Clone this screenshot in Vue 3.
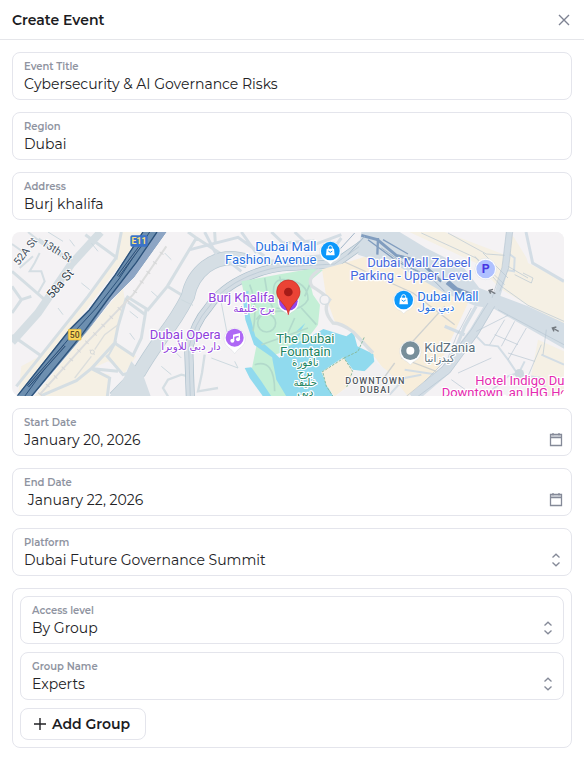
<script setup>
import { reactive } from 'vue'

const form = reactive({
  title: 'Cybersecurity & AI Governance Risks',
  region: 'Dubai',
  address: 'Burj khalifa',
  start: 'January 20, 2026',
  end: ' January 22, 2026',
  platform: 'Dubai Future Governance Summit',
  access: 'By Group',
  groups: ['Experts'],
})

const textFields = [
  { key: 'title', label: 'Event Title' },
  { key: 'region', label: 'Region' },
  { key: 'address', label: 'Address' },
]
const dateFields = [
  { key: 'start', label: 'Start Date' },
  { key: 'end', label: 'End Date' },
]

function addGroup() {
  form.groups.push('Experts')
}
</script>

<template>
  <form class="dialog" @submit.prevent>
    <header class="head">
      <h1>Create Event</h1>
      <button type="button" class="close" aria-label="Close">
        <svg width="12" height="12" viewBox="0 0 12 12"><path d="M1 1 11 11M11 1 1 11" /></svg>
      </button>
    </header>

    <div class="body">
      <div v-for="f in textFields" :key="f.key" class="field">
        <label :for="f.key">{{ f.label }}</label>
        <input :id="f.key" v-model="form[f.key]" type="text" />
      </div>

      <svg class="map" viewBox="12 12 1656 492" preserveAspectRatio="xMidYMid slice" role="img" aria-label="Map">
        <rect x="12" y="12" width="1656" height="492" fill="#f4f2f4" />

        <!-- left blocks -->
        <g fill="#f5f0e4">
          <path d="M335 12H410L230 250 60 470 30 505 40 415 95 385 250 200 325 90Z" />
          <path d="M80 505 225 325 345 180 350 215 330 290 325 345 385 385 350 435 300 400 245 425 305 440 300 505Z" />
        </g>
        <g fill="none" stroke="#d5dee3" stroke-width="9">
          <path d="M12 130 110 215M12 175 40 215 12 255M40 215 70 205M12 322 95 380M232 20 325 88 340 12M325 88 240 205 25 475" />
          <path d="M60 12 95 40 190 100 230 60M12 48 50 75M95 75 80 105 65 130 100 130 110 160 90 195" stroke-width="6" />
          <path d="M75 85 35 120" stroke-width="6" />
          <path d="M12 342 90 255 190 108 278 12" stroke-width="24" />
          <path d="M90 35 190 100" stroke-width="13" />
          <path d="M355 205 420 245 478 175 565 30M355 210 330 295 320 345 375 382 400 330 414 245M478 175 520 200M540 12 562 28 650 85M620 12 622 45M360 222 412 260M100 503 205 458 250 422 330 430M320 345 250 422 305 450 298 505M295 382 345 440 375 432" />
          <path d="M325 340 300 385 340 435" stroke-width="6" />
          <path d="M555 448 520 440 480 455 465 480 480 505M590 380 582 435 570 490 630 480" stroke-width="7" />
        </g>
        <g fill="none" stroke-linecap="butt">
          <path d="M720 100Q650 75 595 115 550 150 540 205 510 265 460 330 415 395 395 430 360 470 320 510" stroke="#b9c9d3" stroke-width="42" />
          <path d="M720 100Q650 75 595 115 550 150 540 205 510 265 460 330 415 395 395 430 360 470 320 510" stroke="#d5dee4" stroke-width="38" />
        </g>
        <path d="M370 400 405 440 430 510H300L345 455Z" fill="#d5dee4" />
        <path d="M120 12 165 40M185 35 200 55M250 45 270 70M220 165 245 185M150 240 165 260M430 190 450 208M365 250 390 270M470 75 490 95M365 315 380 335M460 415 490 440M520 215 555 232M500 370 520 390M640 225 660 330M610 390 690 420 680 400" fill="none" stroke="#cdd9df" stroke-width="3" />
        <path d="M95 500 230 350 375 200 475 55" fill="none" stroke="#dcdddd" stroke-width="6" />
        <path d="M95 500 230 350 375 200 475 55" fill="none" stroke="#d6d7d8" stroke-width="14" stroke-dasharray="3 32" />
        <path d="M200 450 250 385M245 365 260 380M260 365 290 320 330 290" fill="none" stroke="#dcdedc" stroke-width="4" />
        <circle cx="253" cy="372" r="6" fill="#f5f0e4" stroke="#d6d9d8" stroke-width="3" />

        <!-- highway -->
        <path d="M25 505 185 302 242 245 320 140 403 12H475L378 148 310 215 225 325 73 505Z" fill="#6d8fb0" />
        <path d="M475 12 378 148 310 215 230 320 300 215 385 105 447 12Z" fill="#8da5c4" />
        <g fill="none" stroke="#2c527b" stroke-width="4">
          <path d="M27 505 187 303 244 246 322 140 405 12" />
          <path d="M70 505 220 322 300 213 385 103 447 12" />
          <path d="M50 505 130 395 205 305 265 240 335 150 425 12" stroke-width="3" />
        </g>
        <path d="M60 475 170 352M330 145 400 50" stroke="#2c527b" stroke-width="8" />
        <path d="M60 475 170 352M330 145 400 50" stroke="#a9bdd0" stroke-width="2" />

        <!-- central roads -->
        <g fill="none" stroke="#d4dde4">
          <path d="M546 65 690 28 770 85M590 12 625 80M700 12 745 75M790 12 825 45 920 38M860 12 905 55 1000 20M1000 30 960 85M650 90 700 130" stroke-width="9" />
          <path d="M546 68 600 90 700 95 745 115" stroke-width="0" />
          <path d="M715 95Q800 110 850 95L960 85" stroke-width="16" />
        </g>
        <path d="M547 510 542 360Q560 285 600 240 640 180 720 145 790 115 850 115L980 108 1055 55 1110 12" fill="none" stroke="#a9bdca" stroke-width="27" />
        <path d="M547 510 542 360Q560 285 600 240 640 180 720 145 790 115 850 115L980 108 1055 55 1110 12" fill="none" stroke="#d4dde4" stroke-width="23" />
        <path d="M547 510 542 360Q560 285 600 240 640 180 720 145 790 115 850 115L980 108 1055 55 1110 12" fill="none" stroke="#b5c6d1" stroke-width="2" />

        <!-- mall -->
        <path d="M942 124 1010 105 1085 82 1180 105 1380 225 1285 430 1200 505H1175L1140 440 1104 392 1036 315 980 280 955 210Z" fill="#f8eedb" />

        <!-- park and water -->
        <path d="M700 160 820 138 910 122 945 126 905 160 915 200 936 230 930 290 900 330 815 375 790 385 850 505H765L730 430 746 350 725 280Z" fill="#c4efd6" />
        <g fill="#90daee">
          <path d="M702 190 722 190 718 215 726 265 742 325 796 372 815 390 828 360 900 330 946 303 1015 325 1036 310 1048 355 1096 378 1100 408 1070 430 1035 425 1006 388 940 432 975 505H835L805 455 792 388 738 350 712 275Z" />
          <path d="M710 420 730 418 760 460 790 505H765L725 450Z" />
          <path d="M865 310 892 285 880 305ZM840 335 880 312 870 332Z" />
        </g>
        <g fill="none" stroke="#b2dacb" stroke-width="5">
          <circle cx="776" cy="285" r="27" />
          <path d="M725 170Q750 230 735 310M745 275Q760 245 840 250M800 220Q785 150 830 155 900 160 900 215 880 255 805 240M770 150 780 210 800 250M815 145 825 190M905 170 890 205M760 350 900 300M880 240 925 290M840 315 860 270M740 410Q800 390 800 490" />
        </g>
        <path d="M935 125Q895 150 912 175 945 195 965 215 940 245 975 285 1000 285 1036 312L1095 375" fill="none" stroke="#dadfe2" stroke-width="10" />
        <circle cx="950" cy="215" r="14" fill="#f4f2f4" stroke="#d5dde2" stroke-width="4" />
        <path d="M942 432 1008 390 1034 430 1020 475 980 505 955 472Z" fill="#f8eedb" />
        <path d="M942 432 1008 390 1034 430 1015 480M945 435 955 475 975 505M1008 390 1050 370 1070 325" fill="none" stroke="#89bba0" stroke-width="3" stroke-dasharray="8 4" />
        <path d="M1100 400 1070 430 1035 430 1020 478 985 505H1200L1140 430Z" fill="#f1f0f1" />

        <!-- right side -->
        <path d="M1204 12 1404 105 1474 180 1564 235 1668 290V160L1560 105 1545 50 1500 12 1500 80 1400 45 1330 12Z" fill="#f5f0e4" />
        <path d="M1310 12 1490 80 1498 12ZM1508 12H1668V155L1565 105Z" fill="#f4f2f4" />
        <path d="M1590 335 1668 370V505H1600L1570 440Z" fill="#f5f0e4" />
        <path d="M1060 12H1175L1254 60 1364 115 1414 180 1560 235 1668 285V362L1454 240 1404 235 1304 192 1180 120 1050 80Z" fill="#d3dde5" />
        <g fill="none" stroke="#d3dde5">
          <path d="M1504 12 1492 120 1464 215" stroke-width="19" />
          <path d="M1450 225 1400 310 1315 425 1215 510" stroke-width="30" />
          <path d="M1404 235 1370 295 1340 370 1280 455 1210 500M1310 295 1370 320" stroke-width="10" />
          <path d="M1554 12 1574 105 1668 160" stroke-width="9" />
          <path d="M1500 75 1520 90 1518 130 1488 125M1400 320 1430 350 1470 355 1500 395 1530 440 1600 450 1620 505M1530 435 1500 445 1430 505M1530 440 1550 400M1668 410 1600 380" stroke-width="6" />
          <path d="M1145 500 1190 450 1240 440M1190 425 1290 440" stroke-width="6" />
        </g>
        <circle cx="1534" cy="437" r="14" fill="#cdd8de" />
        <g fill="none" stroke="#b7c6d2" stroke-width="2">
          <path d="M1240 15 1404 90 1480 175 1560 232 1668 280M1495 12 1482 118 1452 210M1514 12 1502 120 1475 190M1470 245 1668 350M1440 225 1390 305 1305 415 1195 505M1460 235 1410 320 1325 435 1230 505M1390 240 1345 325 1320 390 1250 460M1400 85 1490 170M1425 75 1500 150M1320 15 1435 78 1490 82" />
          <path d="M1405 310 1500 262M1445 350 1490 275M1480 355 1520 280M1500 395 1555 300M1460 320 1530 350M1500 375 1580 400M1560 445 1600 350M1330 455 1400 505M1350 435 1450 390M1615 305 1605 380M1560 150 1500 115M1520 140 1570 165 1575 150 1545 135" />
        </g>
        <path d="M1010 102 1215 195 1340 290M1310 235 1210 345M1160 405 1120 460M1180 390 1285 430" fill="none" stroke="#d0d2d0" stroke-width="4" />
        <g fill="none" stroke="#819dbf" stroke-width="9">
          <path d="M1060 22 1108 35 1165 82 1235 100 1300 160" />
          <path d="M1080 35 1170 102 1230 130M1125 35 1200 78" stroke-width="4" />
          <path d="M1318 162 1345 185 1398 205" stroke-width="15" />
          <path d="M1110 30 1108 80" stroke-width="7" />
        </g>
        <path d="M1020 80 1070 25M990 70 1040 15M1120 60 1190 108 1270 150 1310 190" fill="none" stroke="#a3b6c8" stroke-width="3" />
        <g fill="none" stroke="#747a80" stroke-width="4">
          <path d="M1462 197 1444 187M1455 184 1443 187 1448 197M1652 310 1634 300M1645 297 1633 300 1638 310" />
        </g>

        <!-- road shields -->
        <rect x="367" y="22" width="52" height="34" rx="5" fill="#3b73c7" />
        <text x="393" y="48" class="shield" fill="#ffe27a">E11</text>
        <rect x="181" y="304" width="38" height="32" rx="2" fill="#fbd65a" stroke="#e6b93b" stroke-width="2" />
        <text x="200" y="329" class="shield thin" fill="#5b4a24">50</text>

        <!-- street names -->
        <g class="street">
          <text transform="translate(32 114) rotate(-53)">52A St</text>
          <text transform="translate(98 50) rotate(32)">13th St</text>
          <text transform="translate(132 214) rotate(-49)" class="major">58a St</text>
        </g>

        <!-- place markers -->
        <g fill="#fff" stroke="#c9ced3" stroke-width="1">
          <path d="M967 110Q960 101 948 97A32 32 0 1 1 986 97Q974 101 967 110Z" />
          <path d="M1187 257Q1180 248 1168 244A32 32 0 1 1 1206 244Q1194 248 1187 257Z" />
          <path d="M680 377Q673 366 661 358A32 32 0 1 1 699 358Q687 366 680 377Z" />
          <path d="M1207 411Q1200 401 1188 396A32 32 0 1 1 1226 396Q1214 401 1207 411Z" />
          <path d="M841 262Q834 253 822 247A32 32 0 1 1 860 247Q848 253 841 262Z" />
          <circle cx="1433" cy="123" r="32" />
        </g>
        <circle cx="967" cy="69" r="28" fill="#0c98fb" />
        <circle cx="1187" cy="216" r="28" fill="#0c98fb" />
        <circle cx="680" cy="329" r="27" fill="#ae68f5" />
        <circle cx="1207" cy="368" r="28" fill="#788f9b" />
        <circle cx="841" cy="220" r="28" fill="#9345e8" />
        <circle cx="1433" cy="123" r="28" fill="#afc1ff" />
        <g fill="#fff">
          <path d="M956 62H978L980 82H954ZM1176 209H1198L1200 229H1174Z" />
          <circle cx="1207" cy="368" r="12" />
          <circle cx="673" cy="338" r="6" /><circle cx="690" cy="334" r="6" />
          <path d="M675 320 696 315V334H692V323L679 326V338H675Z" />
        </g>
        <path d="M961 63V59Q961 53 967 53T973 59V63M1181 210V206Q1181 200 1187 200T1193 206V210" fill="none" stroke="#fff" stroke-width="3" />
        <path d="M961 69Q967 77 973 69M1181 216Q1187 224 1193 216" fill="none" stroke="#0c98fb" stroke-width="3" />
        <text x="1433" y="136" class="parking">P</text>
        <path d="M841 260C836 225 806 220 806 191A35 35 0 0 1 876 191C876 220 846 225 841 260Z" fill="#ea4335" stroke="#c5221f" stroke-width="2" />
        <circle cx="841" cy="192" r="13" fill="#a51c18" />

        <!-- place names -->
        <g class="place blue end">
          <text x="925" y="69">Dubai Mall</text>
          <text x="925" y="108">Fashion Avenue</text>
        </g>
        <g class="place indigo end">
          <text x="1388" y="117">Dubai Mall Zabeel</text>
          <text x="1391" y="156">Parking - Upper Level</text>
        </g>
        <g class="place blue">
          <text x="1228" y="220">Dubai Mall</text>
          <text x="1228" y="250" class="arabic">دبي مول</text>
        </g>
        <g class="place purple end">
          <text x="800" y="222">Burj Khalifa</text>
          <text x="800" y="252" class="arabic">برج خليفة</text>
          <text x="638" y="334">Dubai Opera</text>
          <text x="638" y="365" class="arabic">دار دبي للأوبرا</text>
        </g>
        <g class="place green mid">
          <text x="892" y="346">The Dubai</text>
          <text x="892" y="385">Fountain</text>
          <text x="892" y="414" class="arabic">نافورة</text>
          <text x="892" y="444" class="arabic">برج</text>
          <text x="892" y="474" class="arabic">خليفة</text>
          <text x="892" y="504" class="arabic">دبي</text>
        </g>
        <g class="place slate">
          <text x="1249" y="371">KidZania</text>
          <text x="1249" y="402" class="arabic">كيدزانيا</text>
        </g>
        <g class="place pink">
          <text x="1402" y="471">Hotel Indigo Dubai</text>
          <text x="1301" y="508">Downtown, an IHG Hotel</text>
        </g>
        <g class="district">
          <text x="1102" y="467">DOWNTOWN</text>
          <text x="1102" y="495">DUBAI</text>
        </g>
      </svg>

      <div v-for="f in dateFields" :key="f.key" class="field">
        <label :for="f.key">{{ f.label }}</label>
        <input :id="f.key" v-model="form[f.key]" type="text" />
        <svg class="icon" width="14" height="14" viewBox="0 0 14 14">
          <path d="M1 1H13V4H1Z" class="tint" />
          <path d="M1.5 1.5H12.5V12.5H1.5ZM1.5 4.5H12.5M4 0V2.5M10 0V2.5" />
        </svg>
      </div>

      <div class="field">
        <label for="platform">Platform</label>
        <select id="platform" v-model="form.platform">
          <option>Dubai Future Governance Summit</option>
        </select>
        <svg class="icon" width="14" height="14" viewBox="0 0 14 14"><path d="M3.5 4.5 7 1.2 10.5 4.5M3.5 9.5 7 12.8 10.5 9.5" /></svg>
      </div>

      <section class="access">
        <div class="field">
          <label for="access">Access level</label>
          <select id="access" v-model="form.access">
            <option>By Group</option>
          </select>
          <svg class="icon" width="14" height="14" viewBox="0 0 14 14"><path d="M3.5 4.5 7 1.2 10.5 4.5M3.5 9.5 7 12.8 10.5 9.5" /></svg>
        </div>
        <div v-for="(g, i) in form.groups" :key="i" class="field">
          <label :for="'group' + i">Group Name</label>
          <select :id="'group' + i" v-model="form.groups[i]">
            <option>Experts</option>
          </select>
          <svg class="icon" width="14" height="14" viewBox="0 0 14 14"><path d="M3.5 4.5 7 1.2 10.5 4.5M3.5 9.5 7 12.8 10.5 9.5" /></svg>
        </div>
        <button type="button" class="add" @click="addGroup">
          <svg width="14" height="14" viewBox="0 0 14 14"><path d="M7 1V13M1 7H13" /></svg>
          Add Group
        </button>
      </section>
    </div>
  </form>
</template>

<style>
body {
  background: #fff;
}
</style>

<style scoped>
.dialog {
  font-family: Montserrat, Inter, sans-serif;
  color: #1c1c1f;
}
.dialog * {
  box-sizing: border-box;
}
.head {
  display: flex;
  align-items: center;
  justify-content: space-between;
  height: 40px;
  padding: 0 12px;
  border-bottom: 1px solid #e5e6ea;
}
h1 {
  margin: 0;
  font-size: 14px;
  line-height: 20px;
  font-weight: 600;
}
button {
  font: inherit;
  color: inherit;
  background: #fff;
  cursor: pointer;
}
.close {
  display: flex;
  padding: 2px;
  border: 0;
}
.close svg {
  fill: none;
  stroke: #7d8292;
  stroke-width: 1.4;
}
.body {
  display: flex;
  flex-direction: column;
  gap: 12px;
  padding: 12px;
}
.field {
  display: grid;
  grid-template-columns: 1fr 14px;
  grid-template-rows: 14px 20px;
  align-items: center;
  padding: 7px 8px 5px 11px;
  border: 1px solid #e4e5ec;
  border-radius: 8px;
}
.field label {
  grid-column: 1 / -1;
  font-size: 10px;
  line-height: 14px;
  font-weight: 600;
  color: #8f94a1;
}
.field input,
.field select {
  grid-area: 2 / 1 / 3 / -1;
  width: 100%;
  min-width: 0;
  height: 20px;
  margin: 0;
  padding: 0;
  border: 0;
  outline: 0;
  appearance: none;
  background: transparent;
  font: inherit;
  font-size: 14px;
  line-height: 20px;
  color: #222225;
}
.icon {
  grid-area: 2 / 2;
  fill: none;
  stroke: #858a98;
  stroke-width: 1.3;
  pointer-events: none;
}
.tint {
  fill: #d9dbe2;
  stroke: none;
}
.access {
  display: flex;
  flex-direction: column;
  gap: 8px;
  padding: 7px;
  border: 1px solid #e4e5ec;
  border-radius: 8px;
}
.add {
  display: flex;
  align-items: center;
  align-self: flex-start;
  gap: 5px;
  height: 32px;
  padding: 0 15px 0 12px;
  border: 1px solid #e4e5ec;
  border-radius: 8px;
  font-size: 14px;
  line-height: 20px;
  font-weight: 600;
}
.add svg {
  fill: none;
  stroke: #222225;
  stroke-width: 1.4;
}
.map {
  display: block;
  width: 100%;
  max-width: 552px;
  border-radius: 8px;
}
.map text {
  font-family: Roboto, "DejaVu Sans", sans-serif;
  paint-order: stroke;
  stroke-linejoin: round;
}
.place {
  font-size: 39px;
  stroke: #fff;
  stroke-width: 7px;
}
.place .arabic {
  font-size: 31px;
}
.end {
  text-anchor: end;
}
.mid {
  text-anchor: middle;
}
.blue {
  fill: #2870df;
}
.indigo {
  fill: #4668dc;
}
.purple {
  fill: #9040dc;
}
.green {
  fill: #218462;
}
.slate {
  fill: #5b707c;
}
.pink {
  fill: #e52bb0;
}
.street {
  font-size: 32px;
  fill: #46525f;
  stroke: #fff;
  stroke-width: 5px;
}
.major {
  font-size: 36px;
  fill: #323f4c;
}
.shield {
  font-size: 26px;
  font-weight: 700;
  text-anchor: middle;
}
.thin {
  font-weight: 500;
}
.parking {
  font-size: 37px;
  font-weight: 700;
  fill: #4737e2;
  text-anchor: middle;
}
.district {
  font-size: 27px;
  font-weight: 500;
  letter-spacing: 3px;
  text-anchor: middle;
  fill: #50565c;
  stroke: #fff;
  stroke-width: 5px;
}
</style>
